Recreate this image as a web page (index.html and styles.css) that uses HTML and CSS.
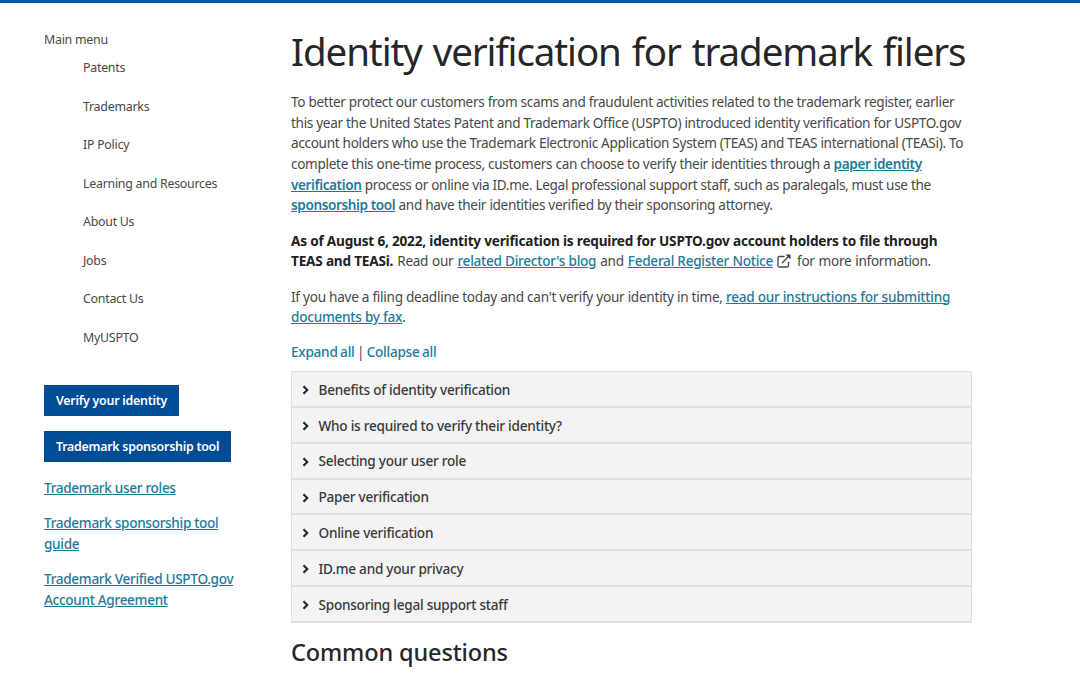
FILE: index.html
```
<!DOCTYPE html>
<html lang="en">
<head>
    <meta charset="UTF-8">
    <meta name="viewport" content="width=device-width, initial-scale=1.0">
    <title>Identity verification for trademark filers | USPTO</title>
    <link rel="stylesheet" href="styles.css">
</head>
<body>
    <div class="page">
        <aside class="sidebar">
            <nav class="main-menu">
                <div class="menu-title">Main menu</div>
                <ul>
                    <li><a href="#">Patents</a></li>
                    <li><a href="#">Trademarks</a></li>
                    <li><a href="#">IP Policy</a></li>
                    <li><a href="#">Learning and Resources</a></li>
                    <li><a href="#">About Us</a></li>
                    <li><a href="#">Jobs</a></li>
                    <li><a href="#">Contact Us</a></li>
                    <li><a href="#">MyUSPTO</a></li>
                </ul>
            </nav>
            <a class="button" href="#">Verify your identity</a>
            <a class="button" href="#">Trademark sponsorship tool</a>
            <div class="side-links">
                <p><a href="#">Trademark user roles</a></p>
                <p><a href="#">Trademark sponsorship tool<br>guide</a></p>
                <p><a href="#">Trademark Verified USPTO.gov<br>Account Agreement</a></p>
            </div>
        </aside>

        <main class="content">
            <h1>Identity verification for trademark filers</h1>
            <p>To better protect our customers from scams and fraudulent activities related to the trademark register, earlier<br>
            this year the United States Patent and Trademark Office (USPTO) introduced identity verification for USPTO.gov<br>
            account holders who use the Trademark Electronic Application System (TEAS) and TEAS international (TEASi). To<br>
            complete this one-time process, customers can choose to verify their identities through a <a class="strong" href="#">paper identity<br>
            verification</a> process or online via ID.me. Legal professional support staff, such as paralegals, must use the<br>
            <a class="strong" href="#">sponsorship tool</a> and have their identities verified by their sponsoring attorney.</p>
            <p class="notice"><strong>As of August 6, 2022, identity verification is required for USPTO.gov account holders to file through<br>
            TEAS and TEASi.</strong> Read our <a href="#">related Director's blog</a> and <a href="#">Federal Register Notice</a><svg class="external" viewBox="0 0 14 14"><path d="M7.500 2.500H2.500Q1 2.500 1 4v7.500Q1 13 2.500 13H10q1.500 0 1.500-1.500V8M5 9l7-7" /><path class="head" d="M8.500.5h5v5z" /></svg> for more information.</p>
            <p class="deadline">If you have a filing deadline today and can't verify your identity in time, <a href="#">read our instructions for submitting<br>
            documents by fax</a>.</p>
            <p class="toggles"><a href="#">Expand all</a> | <a href="#">Collapse all</a></p>

            <div class="accordion">
                <div class="row"><svg class="chevron" viewBox="0 0 8 8"><path d="M2 1l3 3-3 3" /></svg><span>Benefits of identity verification</span></div>
                <div class="row"><svg class="chevron" viewBox="0 0 8 8"><path d="M2 1l3 3-3 3" /></svg><span>Who is required to verify their identity?</span></div>
                <div class="row"><svg class="chevron" viewBox="0 0 8 8"><path d="M2 1l3 3-3 3" /></svg><span>Selecting your user role</span></div>
                <div class="row"><svg class="chevron" viewBox="0 0 8 8"><path d="M2 1l3 3-3 3" /></svg><span>Paper verification</span></div>
                <div class="row"><svg class="chevron" viewBox="0 0 8 8"><path d="M2 1l3 3-3 3" /></svg><span>Online verification</span></div>
                <div class="row"><svg class="chevron" viewBox="0 0 8 8"><path d="M2 1l3 3-3 3" /></svg><span>ID.me and your privacy</span></div>
                <div class="row"><svg class="chevron" viewBox="0 0 8 8"><path d="M2 1l3 3-3 3" /></svg><span>Sponsoring legal support staff</span></div>
            </div>

            <h2>Common questions</h2>
        </main>
    </div>
</body>
</html>
```
FILE: styles.css
```
* {
    box-sizing: border-box;
}
body {
    margin: 0;
    height: 682px;
    overflow: hidden;
    border-top: 3px solid #0059a9;
    background-color: #fff;
    color: #484848;
    font-family: "Noto Sans", sans-serif;
    font-size: 13.6px;
    line-height: 20.65px;
    letter-spacing: -0.32px;
}
a {
    color: #1c7a9c;
    font-weight: 500;
}
.page {
    display: flex;
    white-space: nowrap;
}
.sidebar {
    width: 291px;
    padding: 26.5px 0 0 44px;
}
.main-menu {
    font-size: 12.4px;
    letter-spacing: -0.26px;
}
.main-menu ul {
    list-style: none;
    margin: 0 0 26.5px;
    padding: 0 0 0 39px;
}
.main-menu li {
    height: 38.5px;
    padding-top: 8.3px;
}
.main-menu a {
    color: #484848;
    font-weight: 400;
    text-decoration: none;
}
.button {
    display: table;
    height: 31px;
    margin-bottom: 15.5px;
    padding: 6px 12px 4px;
    background-color: #004c97;
    color: #fff;
    font-size: 12.4px;
    font-weight: 600;
    text-decoration: none;
    letter-spacing: -0.25px;
}
.side-links p,
.content p {
    margin: 0 0 14.7px;
}
.content {
    width: 681px;
}
.content p a {
    letter-spacing: -0.26px;
}
h1 {
    margin: 23px 0 16px;
    color: #262626;
    font-size: 38.5px;
    font-weight: 400;
    line-height: 50px;
    letter-spacing: -1.1px;
    word-spacing: 2px;
}
h2 {
    margin: 10.5px 0 0;
    color: #262626;
    font-size: 23.5px;
    font-weight: 500;
    line-height: 38px;
    letter-spacing: -0.14px;
}
strong {
    color: #212121;
    font-weight: 700;
    letter-spacing: -0.2px;
    word-spacing: 0;
}
.content p a.strong {
    font-weight: 600;
    letter-spacing: -0.4px;
}
.notice {
    word-spacing: 0.8px;
}
.notice a {
    word-spacing: 0;
}
.deadline {
    letter-spacing: -0.27px;
}
.content .toggles {
    margin: -0.6px 0 8.6px;
    word-spacing: -0.7px;
}
.toggles a {
    text-decoration: none;
}
.external {
    width: 14px;
    height: 14px;
    margin: 0 2px 0 4px;
    vertical-align: -2px;
    fill: none;
    stroke: #424242;
    stroke-width: 1.3;
}
.external .head {
    fill: #424242;
    stroke: none;
}
.accordion {
    border: 1px solid #dfdfdf;
    border-width: 1px 1px 0;
}
.row {
    display: flex;
    align-items: center;
    height: 35.8px;
    padding: 2px 0 0 8.500px;
    border-bottom: 2px solid #dfdfdf;
    background-color: #f3f3f3;
    color: #3a3a3a;
    font-weight: 500;
    letter-spacing: -0.25px;
}
.chevron {
    width: 10px;
    height: 10px;
    margin-right: 8px;
    fill: none;
    stroke: #262626;
    stroke-width: 1.7;
}
```
